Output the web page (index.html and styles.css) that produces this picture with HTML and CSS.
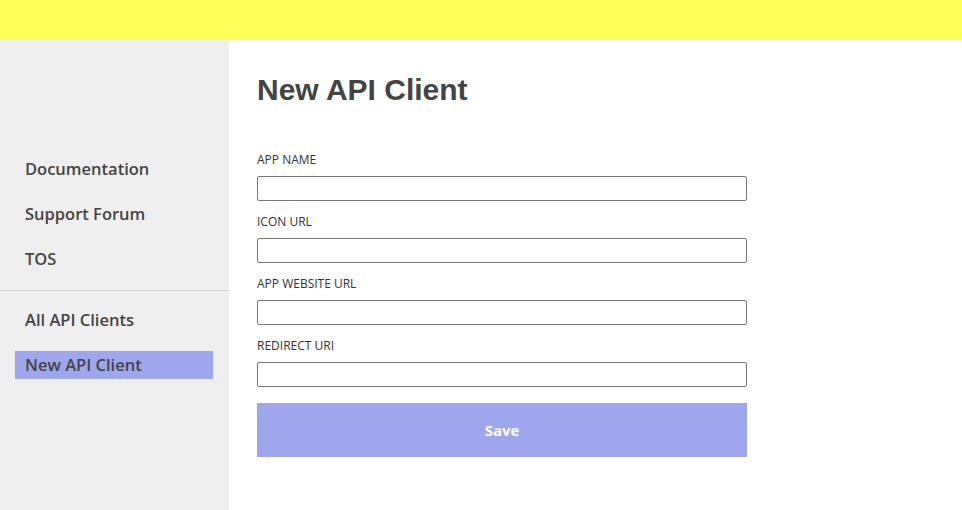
FILE: index.html
```html
<!DOCTYPE html>
<html>
<head>
<meta charset="utf-8">
<link rel="stylesheet" href="styles.css">
</head>
<body>
<header class="topbar"></header>
<div class="layout">
  <nav class="sidebar">
    <ul class="nav-group">
      <li class="nav-item">Documentation</li>
      <li class="nav-item">Support Forum</li>
      <li class="nav-item">TOS</li>
    </ul>
    <ul class="nav-group second">
      <li class="nav-item">All API Clients</li>
      <li class="nav-item active">New API Client</li>
    </ul>
  </nav>
  <main class="main">
    <h1 class="title">New API Client</h1>
    <form class="form">
      <label class="label">APP NAME</label>
      <input class="input" type="text">
      <label class="label">ICON URL</label>
      <input class="input" type="text">
      <label class="label">APP WEBSITE URL</label>
      <input class="input" type="text">
      <label class="label">REDIRECT URI</label>
      <input class="input last" type="text">
      <button class="save" type="button">Save</button>
    </form>
  </main>
</div>
</body>
</html>
```
FILE: styles.css
```css
* { box-sizing: border-box; }
html, body { margin: 0; padding: 0; height: 100%; }
body { font-family: "Open Sans", sans-serif; color: #444; background: #fff; }
.topbar { height: 40px; background: #ffff59; }
.layout { display: flex; height: 470px; }
.sidebar { width: 229px; background: #efefef; padding-top: 115px; }
.nav-group { list-style: none; margin: 0; padding: 0 16px 0 15px; }
.nav-group.second { border-top: 1px solid #d4d4d4; padding-top: 15px; }
.nav-item { height: 28px; line-height: 28px; padding-left: 10px; margin-bottom: 17px; font-size: 16.5px; font-weight: 600; color: #444; }
.nav-item.active { background: #9ea7ee; }
.main { flex: 1; padding: 30px 28px; }
.title { margin: 0 0 43px; font-family: "Liberation Sans", Arial, sans-serif; font-weight: 700; font-size: 30px; line-height: 40px; color: #444; }
.form { display: flex; flex-direction: column; width: 490px; }
.label { font-size: 12px; line-height: 14px; color: #333; margin-bottom: 9px; }
.input { height: 25px; border: 1px solid #777; border-radius: 2px; margin: 0 0 14px; padding: 0 4px; font: inherit; }
.input.last { margin-bottom: 16px; }
.save { height: 54px; border: 0; background: #9ea7ee; color: #fff; font-family: "Open Sans", sans-serif; font-weight: 700; font-size: 15px; }
```
